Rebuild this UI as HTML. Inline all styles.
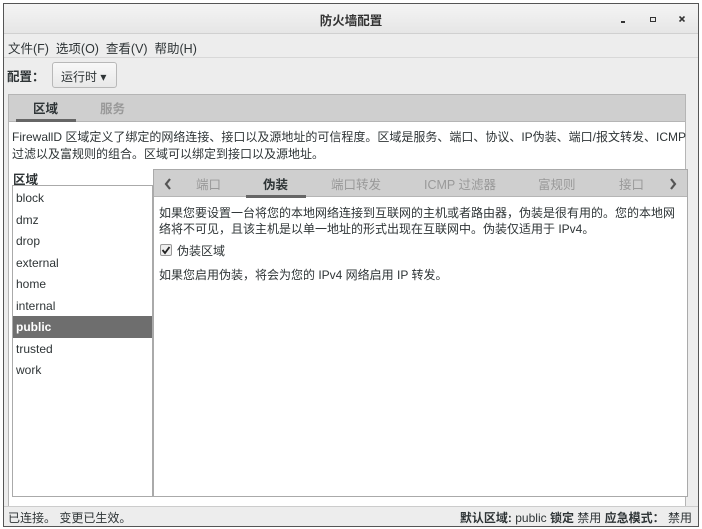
<!DOCTYPE html>
<html><head><meta charset="utf-8"><style>
*{margin:0;padding:0;box-sizing:border-box}
body{width:702px;height:529px;background:#fff;font-family:"Liberation Sans","Noto Sans CJK SC",sans-serif;font-size:12px;color:#2e3436;position:relative;overflow:hidden}
.a{position:absolute;white-space:nowrap}
</style></head><body>
<div class="a" style="left:3px;top:3px;width:696px;height:524px;border:1px solid #555;background:#ededed"></div>
<div class="a" style="left:4px;top:4px;width:694px;height:30px;background:linear-gradient(#f4f4f4,#e6e6e6);border-bottom:1px solid #d0d0d0"></div>
<div class="a" style="left:0;width:702px;top:10px;text-align:center;font-size:12.5px;font-weight:bold;color:#333">防火墙配置</div>
<div class="a" style="left:621px;top:21px;width:4px;height:2px;background:#333"></div>
<div class="a" style="left:650px;top:17px;width:6px;height:5px;border:1.5px solid #333"></div>
<svg class="a" style="left:679px;top:16px" width="6" height="6"><path d="M0.5 0.5L5.5 5.5M5.5 0.5L0.5 5.5" stroke="#333" stroke-width="1.6"/></svg>
<div class="a" style="left:8px;top:38px;font-size:12.5px">文件(F)&nbsp;&nbsp;选项(O)&nbsp;&nbsp;查看(V)&nbsp;&nbsp;帮助(H)</div>
<div class="a" style="left:4px;top:57px;width:694px;height:1px;background:#d8d8d8"></div>
<div class="a" style="left:7px;top:66px;font-weight:bold;font-size:12.5px">配置：</div>
<div class="a" style="left:52px;top:62px;width:65px;height:26px;border:1px solid #b8b8b8;border-radius:3px;background:linear-gradient(#f8f8f8,#e8e8e8);padding:5px 0 0 8px">运行时 ▾</div>
<div class="a" style="left:8px;top:94px;width:678px;height:28px;background:#cfcfcf;border:1px solid #b5b5b5"></div>
<div class="a" style="left:33px;top:98px;font-weight:bold;font-size:12.5px">区域</div>
<div class="a" style="left:100px;top:98px;font-weight:bold;font-size:12.5px;color:#999">服务</div>
<div class="a" style="left:16px;top:119px;width:60px;height:3px;background:#666"></div>
<div class="a" style="left:8px;top:122px;width:678px;height:384px;background:#fff;border-left:1px solid #b5b5b5;border-right:1px solid #b5b5b5"></div>
<div class="a" style="left:12px;top:129px;font-size:12px;line-height:17px">FirewallD 区域定义了绑定的网络连接、接口以及源地址的可信程度。区域是服务、端口、协议、IP伪装、端口/报文转发、ICMP<br>过滤以及富规则的组合。区域可以绑定到接口以及源地址。</div>
<div class="a" style="left:13px;top:169px;font-weight:bold;font-size:12.5px">区域</div>
<div class="a" style="left:12px;top:185px;width:141px;height:312px;border:1px solid #aaa;background:#fff"></div>
<div class="a" style="left:13px;top:316px;width:139px;height:22px;background:#6e6e6e"></div>
<div class="a" style="left:16px;top:188px;line-height:21.5px;font-size:12px">block<br>dmz<br>drop<br>external<br>home<br>internal<br><span style="color:#fff;font-weight:bold">public</span><br>trusted<br>work</div>
<div class="a" style="left:153px;top:169px;width:535px;height:328px;border:1px solid #aaa;background:#fff"></div>
<div class="a" style="left:154px;top:170px;width:533px;height:27px;background:#cfcfcf;border-bottom:1px solid #b5b5b5"></div>
<svg class="a" style="left:164px;top:178px" width="8" height="12"><path d="M6 1L2 6L6 11" fill="none" stroke="#555" stroke-width="2.2"/></svg>
<svg class="a" style="left:669px;top:178px" width="8" height="12"><path d="M2 1L6 6L2 11" fill="none" stroke="#555" stroke-width="2.2"/></svg>
<div class="a" style="left:196px;top:174px;color:#999;font-size:12.5px">端口</div>
<div class="a" style="left:263px;top:174px;font-weight:bold;font-size:12.5px">伪装</div>
<div class="a" style="left:246px;top:195px;width:60px;height:3px;background:#666"></div>
<div class="a" style="left:331px;top:174px;color:#999;font-size:12.5px">端口转发</div>
<div class="a" style="left:424px;top:174px;color:#999;font-size:12.5px">ICMP 过滤器</div>
<div class="a" style="left:538px;top:174px;color:#999;font-size:12.5px">富规则</div>
<div class="a" style="left:619px;top:174px;color:#999;font-size:12.5px">接口</div>
<div class="a" style="left:159px;top:205px;line-height:16px">如果您要设置一台将您的本地网络连接到互联网的主机或者路由器，伪装是很有用的。您的本地网<br>络将不可见，且该主机是以单一地址的形式出现在互联网中。伪装仅适用于 IPv4。</div>
<div class="a" style="left:160px;top:244px;width:12px;height:12px;border:1px solid #999;border-radius:2px;background:#eee"></div>
<svg class="a" style="left:161px;top:245px" width="10" height="10"><path d="M1.5 5L4 8L8.5 2" fill="none" stroke="#222" stroke-width="1.8"/></svg>
<div class="a" style="left:177px;top:242px">伪装区域</div>
<div class="a" style="left:159px;top:266px">如果您启用伪装，将会为您的 IPv4 网络启用 IP 转发。</div>
<div class="a" style="left:4px;top:506px;width:694px;height:1px;background:#ccc"></div>
<div class="a" style="left:8px;top:509px">已连接。 变更已生效。</div>
<div class="a" style="right:10px;top:509px"><b>默认区域:</b> public <b>锁定</b> 禁用 <b>应急模式：</b> 禁用</div>
</body></html>
